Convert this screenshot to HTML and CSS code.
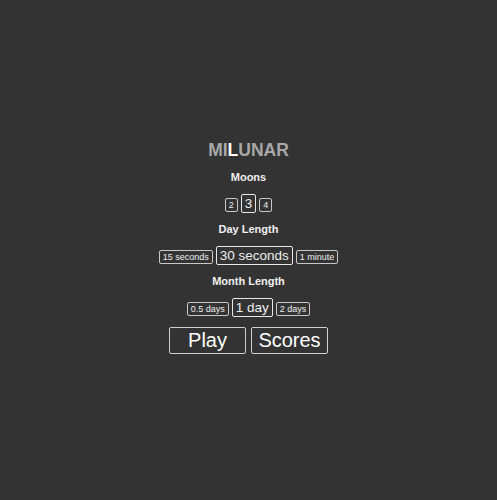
FILE: index.html
```html
<!DOCTYPE html>
<html>
<head>
<meta charset="utf-8">
<link rel="stylesheet" href="styles.css">
</head>
<body>
<div class="menu">
  <h1 class="title">MI<span class="hl">L</span>UNAR</h1>
  <div class="label">Moons</div>
  <div class="opts">
    <span class="opt">2</span>
    <span class="opt sel">3</span>
    <span class="opt">4</span>
  </div>
  <div class="label">Day Length</div>
  <div class="opts">
    <span class="opt">15 seconds</span>
    <span class="opt sel">30 seconds</span>
    <span class="opt">1 minute</span>
  </div>
  <div class="label">Month Length</div>
  <div class="opts">
    <span class="opt">0.5 days</span>
    <span class="opt sel">1 day</span>
    <span class="opt">2 days</span>
  </div>
  <div class="actions">
    <span class="big">Play</span>
    <span class="big">Scores</span>
  </div>
</div>
</body>
</html>
```
FILE: styles.css
```css
html, body {
  margin: 0;
  padding: 0;
  background: #333333;
  height: 100%;
}
body {
  font-family: "Liberation Sans", Arial, sans-serif;
  color: #eeeeee;
}
.menu {
  display: flex;
  flex-direction: column;
  align-items: center;
  padding-top: 140px;
}
.title {
  margin: 0;
  font-size: 17.5px;
  line-height: 20px;
  font-weight: bold;
  color: #a8a8a8;
}
.hl {
  color: #ffffff;
}
.label {
  margin-top: 10px;
  font-size: 11px;
  line-height: 14px;
  font-weight: bold;
  color: #f0f0f0;
}
.opts {
  display: flex;
  align-items: baseline;
  gap: 3px;
  margin-top: 10px;
  margin-bottom: -1px;
}
.opt {
  font-size: 9px;
  line-height: 10px;
  padding: 1px 3px;
  border: 1px solid #c8c8c8;
  border-radius: 2px;
  color: #eeeeee;
}
.opt.sel {
  font-size: 13.5px;
  line-height: 15px;
  padding: 1px 3px;
  border-color: #e8e8e8;
}
.actions {
  display: flex;
  gap: 5px;
  margin-top: 11px;
}
.big {
  width: 75px;
  text-align: center;
  font-size: 20px;
  line-height: 25px;
  border: 1px solid #d0d0d0;
  border-radius: 2px;
  color: #ffffff;
}
```
